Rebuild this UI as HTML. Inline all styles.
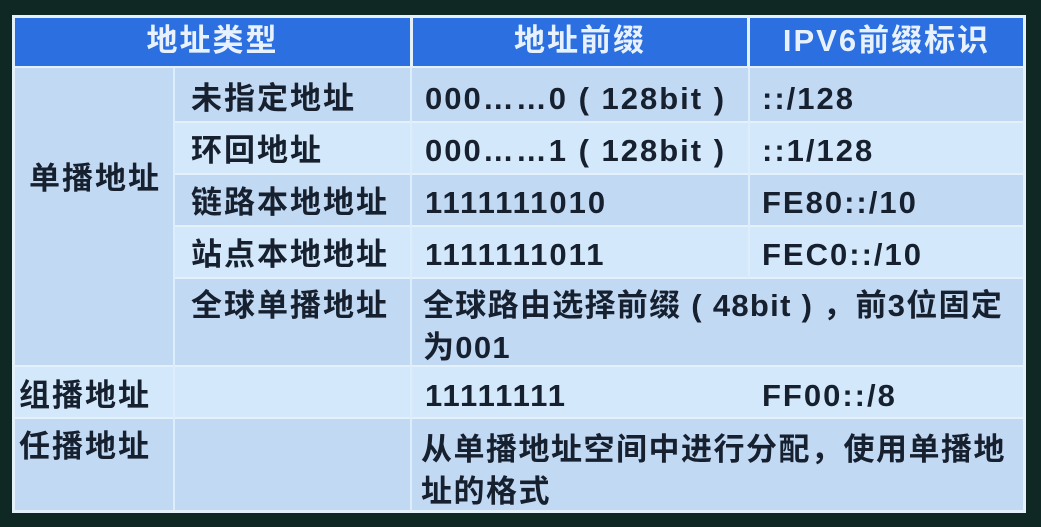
<!DOCTYPE html><html><head><meta charset="utf-8"><style>
body{margin:0;width:1041px;height:527px;background:#0f2824;overflow:hidden;position:relative;font-family:"Liberation Sans","Noto Sans CJK SC",sans-serif;}
.t{position:absolute;left:12px;top:15px;width:1014px;height:498px;background:#e4f1fb;}
.c{position:absolute;box-sizing:border-box;font-size:31px;letter-spacing:2px;font-weight:bold;color:#16202e;line-height:42px;white-space:nowrap;}
.h{background:#2b6fe0;color:#e8f2ff;text-align:center;line-height:46px;}
.d{background:#c2d9f4;}
.l{background:#d3e9fb;}
</style></head><body>
<div class="t"></div>
<div class="c h" style="left:15px;top:18px;width:395px;height:48px;">地址类型</div>
<div class="c h" style="left:413px;top:18px;width:334px;height:48px;">地址前缀</div>
<div class="c h" style="left:750px;top:18px;width:273px;height:48px;">IPV6前缀标识</div>

<div class="c d" style="left:15px;top:68px;width:158px;height:297px;padding:90px 0 0 14px;">单播地址</div>

<div class="c d" style="left:175px;top:68px;width:848px;height:53px;"></div>
<div class="c l" style="left:175px;top:123px;width:848px;height:50px;"></div>
<div class="c d" style="left:175px;top:175px;width:848px;height:50px;"></div>
<div class="c l" style="left:175px;top:227px;width:848px;height:50px;"></div>
<div class="c d" style="left:175px;top:279px;width:848px;height:86px;"></div>
<div class="c l" style="left:15px;top:367px;width:1008px;height:50px;"></div>
<div class="c d" style="left:15px;top:419px;width:1008px;height:91px;"></div>
<div style="position:absolute;left:410px;top:68px;width:2px;height:442px;background:#dcedfb"></div>
<div style="position:absolute;left:173px;top:68px;width:2px;height:442px;background:#dcedfb"></div>
<div style="position:absolute;left:748px;top:68px;width:2px;height:210px;background:#dcedfb"></div>

<div class="c" style="left:191px;top:78px;">未指定地址</div>
<div class="c" style="left:425px;top:78px;">000……0 ( 128bit )</div>
<div class="c" style="left:762px;top:78px;">::/128</div>
<div class="c" style="left:191px;top:130px;">环回地址</div>
<div class="c" style="left:425px;top:130px;">000……1 ( 128bit )</div>
<div class="c" style="left:762px;top:130px;">::1/128</div>
<div class="c" style="left:191px;top:182px;">链路本地地址</div>
<div class="c" style="left:425px;top:182px;">1111111010</div>
<div class="c" style="left:762px;top:182px;">FE80::/10</div>
<div class="c" style="left:191px;top:234px;">站点本地地址</div>
<div class="c" style="left:425px;top:234px;">1111111011</div>
<div class="c" style="left:762px;top:234px;">FEC0::/10</div>
<div class="c" style="left:191px;top:285px;">全球单播地址</div>
<div class="c" style="left:423px;top:285px;letter-spacing:1.3px;">全球路由选择前缀 ( 48bit ) ，前3位固定<br>为001</div>
<div class="c" style="left:19px;top:375px;">组播地址</div>
<div class="c" style="left:425px;top:375px;">11111111</div>
<div class="c" style="left:762px;top:375px;">FF00::/8</div>
<div class="c" style="left:19px;top:426px;">任播地址</div>
<div class="c" style="left:421px;top:429px;letter-spacing:1.5px;">从单播地址空间中进行分配，使用单播地<br>址的格式</div>
</body></html>
